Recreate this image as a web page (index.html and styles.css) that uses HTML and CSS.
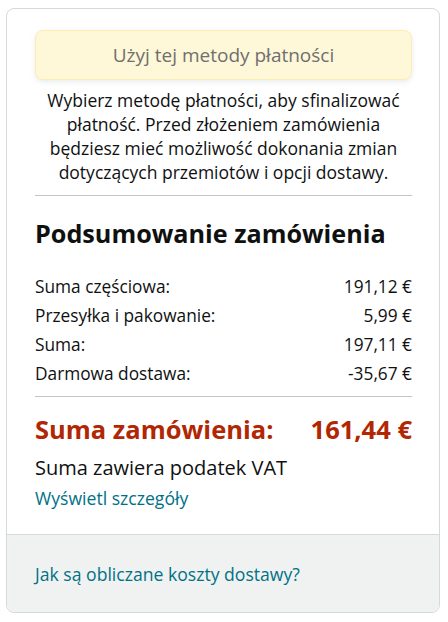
FILE: index.html
```html
<!DOCTYPE html>
<html lang="pl">
<head>
<meta charset="utf-8">
<link rel="stylesheet" href="styles.css">
</head>
<body>
<div class="card">
  <div class="main">
    <div class="btn">Użyj tej metody płatności</div>
    <p class="info">Wybierz metodę płatności, aby sfinalizować płatność. Przed złożeniem zamówienia będziesz mieć możliwość dokonania zmian dotyczących przemiotów i opcji dostawy.</p>
    <hr class="divider">
    <h2 class="title">Podsumowanie zamówienia</h2>
    <div class="rows">
      <div class="row"><span>Suma częściowa:</span><span>191,12 €</span></div>
      <div class="row"><span>Przesyłka i pakowanie:</span><span>5,99 €</span></div>
      <div class="row"><span>Suma:</span><span>197,11 €</span></div>
      <div class="row"><span>Darmowa dostawa:</span><span>-35,67 €</span></div>
    </div>
    <hr class="divider">
    <div class="total"><span>Suma zamówienia:</span><span>161,44 €</span></div>
    <div class="vat">Suma zawiera podatek VAT</div>
    <a class="link">Wyświetl szczegóły</a>
  </div>
  <div class="footer">
    <a class="link">Jak są obliczane koszty dostawy?</a>
  </div>
</div>
</body>
</html>
```
FILE: styles.css
```css
* { box-sizing: border-box; }
html, body { margin: 0; padding: 0; background: #fff; }
body {
  font-family: "Open Sans", "Noto Sans", sans-serif;
  color: #0f1111;
  padding: 8px 8px 9px 6px;
}
.card {
  border: 1px solid #d5d9d9;
  border-radius: 8px;
  overflow: hidden;
  height: 605px;
  display: flex;
  flex-direction: column;
}
.main {
  padding: 21px 27px 24px 28px;
  display: flex;
  flex-direction: column;
}
.btn {
  height: 50px;
  border: 1px solid #fcedb6;
  background: #fef7d8;
  border-radius: 8px;
  display: flex;
  align-items: center;
  justify-content: center;
  font-size: 19px;
  color: #6f6f6f;
  box-shadow: 0 2px 5px rgba(213, 217, 217, .5);
}
.info {
  margin: 8px 0 0;
  text-align: center;
  font-size: 17.5px;
  line-height: 24px;
}
.divider {
  border: 0;
  border-top: 1px solid #c4c4c4;
  margin: 11px 0 0;
  height: 0;
}
.title {
  margin: 21px 0 0;
  font-size: 25.2px;
  line-height: 32px;
  font-weight: 700;
}
.rows { margin-top: 26px; display: flex; flex-direction: column; gap: 5px; }
.row {
  display: flex;
  justify-content: space-between;
  font-size: 17.3px;
  line-height: 24px;
}
.rows + .divider { margin-top: 10px; }
.total {
  margin-top: 16px;
  display: flex;
  justify-content: space-between;
  color: #b12704;
  font-size: 25.5px;
  line-height: 32px;
  font-weight: 700;
}
.vat { margin-top: 10px; font-size: 20px; line-height: 26px; }
.link {
  color: #007185;
  font-size: 17.6px;
  line-height: 24px;
  margin-top: 5px;
}
.footer {
  flex: 1;
  background: #f0f2f2;
  border-top: 1px solid #d5d9d9;
  padding: 0 28px;
  display: flex;
  align-items: center;
}
.footer .link { margin-top: 0; }
```
